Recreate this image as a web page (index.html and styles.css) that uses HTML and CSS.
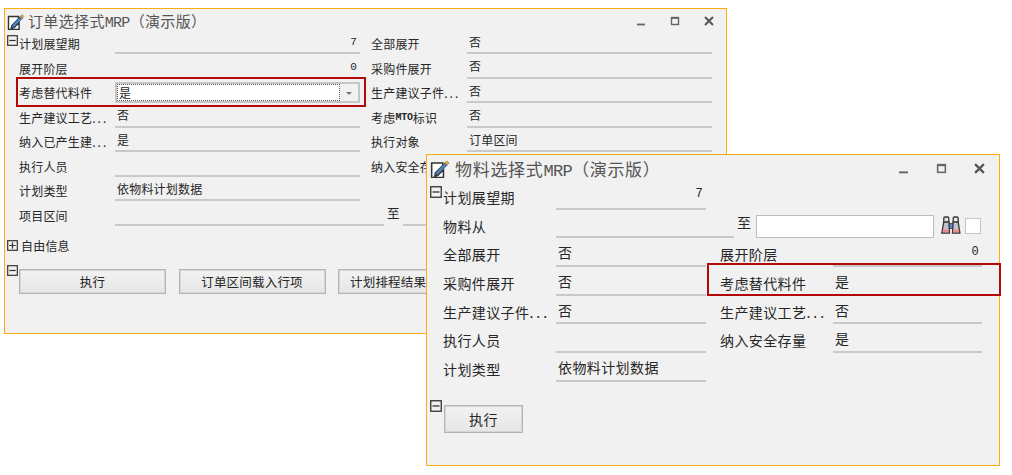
FILE: index.html
```html
<!DOCTYPE html>
<html lang="zh-CN">
<head>
<meta charset="utf-8">
<title>MRP</title>
<link rel="stylesheet" href="styles.css">
</head>
<body>
<svg class="defs" width="0" height="0" aria-hidden="true">
  <symbol id="note" viewBox="0 0 18 18">
    <path d="M1.500 4.500h10v2.200l-6.600 6.800-.6 2.800 2.800-.7 5-5v6.900h-10.600z" fill="#fff" stroke="#333" stroke-width="1.400"/>
    <path d="M5.500 12.800 13.500 4.300l2 1.900-8 8.400-2.700.8z" fill="#4d84b8" stroke="#2d4f73" stroke-width=".7"/>
    <path d="M13.500 4.300l1.600-1.700 2 1.900-1.600 1.700z" fill="#e8b04a" stroke="#a87a20" stroke-width=".6"/>
  </symbol>
  <symbol id="minus" viewBox="0 0 12 12">
    <rect x=".75" y=".75" width="10.500" height="10.500" fill="none" stroke="#333" stroke-width="1.300"/>
    <path d="M2.500 6h7" stroke="#333" stroke-width="1.300"/>
  </symbol>
  <symbol id="plus" viewBox="0 0 12 12">
    <rect x=".75" y=".75" width="10.500" height="10.500" fill="none" stroke="#333" stroke-width="1.300"/>
    <path d="M2.500 6h7M6 2.500v7" stroke="#333" stroke-width="1.300"/>
  </symbol>
  <symbol id="win-min" viewBox="0 0 10 10"><path d="M1 8.500h8" stroke="#666" stroke-width="1.800"/></symbol>
  <symbol id="win-max" viewBox="0 0 10 10"><rect x="1.500" y="1.500" width="7" height="7" fill="none" stroke="#666" stroke-width="1.400"/><path d="M1.500 2.200h7" stroke="#666" stroke-width="1.400"/></symbol>
  <symbol id="win-close" viewBox="0 0 10 10"><path d="M1 1l8 8M9 1l-8 8" stroke="#555" stroke-width="2"/></symbol>
  <symbol id="binoculars" viewBox="0 0 20 18">
    <rect x="2.800" y="1" width="5" height="6" rx="1.200" fill="#e4e6ea" stroke="#333" stroke-width="1.300"/>
    <rect x="12.200" y="1" width="5" height="6" rx="1.200" fill="#e4e6ea" stroke="#333" stroke-width="1.300"/>
    <path d="M2.800 6h5.200l.5 11h-7.700zM12 6h5.200l1.700 11h-7.400z" fill="#bfc3cb" stroke="#333" stroke-width="1.300"/>
    <path d="M8.300 7.500h3.400v5h-3.400z" fill="#5f86cc" stroke="#333" stroke-width=".8"/>
    <path d="M1.800 13.500h6.100v3h-6.100zM12.100 13.500h6.100v3h-6.100z" fill="#ee8c8c"/>
  </symbol>
</svg>

<section class="window window-order">
  <header class="titlebar">
    <svg class="title-icon"><use href="#note"/></svg>
    <h1 class="title">订单选择式<span class="latin">MRP</span>（演示版）</h1>
    <div class="controls">
      <svg class="ctl"><use href="#win-min"/></svg>
      <svg class="ctl"><use href="#win-max"/></svg>
      <svg class="ctl"><use href="#win-close"/></svg>
    </div>
  </header>
  <div class="form">
    <div class="label"><svg class="toggle"><use href="#minus"/></svg>计划展望期</div>
    <div class="field num">7</div>
    <div class="label right">全部展开</div>
    <div class="field">否</div>

    <div class="label">展开阶层</div>
    <div class="field num">0</div>
    <div class="label right">采购件展开</div>
    <div class="field">否</div>

    <div class="label">考虑替代料件</div>
    <div class="combo"><span class="combo-text">是</span><span class="combo-arrow"></span></div>
    <div class="label right">生产建议子件<span class="dots">...</span></div>
    <div class="field">否</div>

    <div class="label">生产建议工艺<span class="dots">...</span></div>
    <div class="field">否</div>
    <div class="label right">考虑<span class="mini">MTO</span>标识</div>
    <div class="field">否</div>

    <div class="label">纳入已产生建<span class="dots">...</span></div>
    <div class="field">是</div>
    <div class="label right">执行对象</div>
    <div class="field">订单区间</div>

    <div class="label">执行人员</div>
    <div class="field"></div>
    <div class="label right">纳入安全存量</div>
    <div class="field"></div>

    <div class="label">计划类型</div>
    <div class="field">依物料计划数据</div>

    <div class="label">项目区间</div>
    <div class="range">
      <div class="field range-from"></div>
      <span class="to">至</span>
      <div class="field range-to"></div>
    </div>
  </div>
  <div class="group-row"><svg class="toggle-inline"><use href="#plus"/></svg>自由信息</div>
  <div class="actions">
    <svg class="toggle-inline action-toggle"><use href="#minus"/></svg>
    <button class="btn">执行</button>
    <button class="btn">订单区间载入行项</button>
    <button class="btn btn-clipped">计划排程结果</button>
  </div>
</section>

<div class="mark mark-order"></div>

<section class="window window-material">
  <header class="titlebar">
    <svg class="title-icon"><use href="#note"/></svg>
    <h1 class="title">物料选择式<span class="latin">MRP</span>（演示版）</h1>
    <div class="controls">
      <svg class="ctl"><use href="#win-min"/></svg>
      <svg class="ctl"><use href="#win-max"/></svg>
      <svg class="ctl"><use href="#win-close"/></svg>
    </div>
  </header>
  <div class="form">
    <div class="label"><svg class="toggle"><use href="#minus"/></svg>计划展望期</div>
    <div class="field num">7</div>

    <div class="label">物料从</div>
    <div class="range">
      <div class="field range-from"></div>
      <span class="to">至</span>
      <div class="text-input"></div>
      <svg class="binoculars"><use href="#binoculars"/></svg>
      <div class="check"></div>
    </div>

    <div class="label">全部展开</div>
    <div class="field">否</div>
    <div class="label right">展开阶层</div>
    <div class="field num">0</div>

    <div class="label">采购件展开</div>
    <div class="field">否</div>
    <div class="label right">考虑替代料件</div>
    <div class="field">是</div>

    <div class="label">生产建议子件<span class="dots">...</span></div>
    <div class="field">否</div>
    <div class="label right">生产建议工艺<span class="dots">...</span></div>
    <div class="field">否</div>

    <div class="label">执行人员</div>
    <div class="field"></div>
    <div class="label right">纳入安全存量</div>
    <div class="field">是</div>

    <div class="label">计划类型</div>
    <div class="field">依物料计划数据</div>
  </div>
  <div class="actions">
    <svg class="toggle-inline action-toggle"><use href="#minus"/></svg>
    <button class="btn">执行</button>
  </div>
</section>

<div class="mark mark-material"></div>
</body>
</html>
```
FILE: styles.css
```css
* { box-sizing: border-box; }
html, body { margin: 0; height: 100%; }
body {
  position: relative;
  background: #fff;
  overflow: hidden;
  color: #262626;
  font-family: "Noto Sans CJK SC", "Liberation Sans", sans-serif;
}
.defs { position: absolute; }

.window {
  position: absolute;
  background: #f1f1f1;
  border: 1px solid #ffab12;
  overflow: hidden;
}
.window-order {
  left: 4px; top: 8px; width: 723px; height: 326px;
  font-size: 12px;
  letter-spacing: .2px;
  --pad: 14px;
}
.window-material {
  left: 426px; top: 154px; width: 574px; height: 312px;
  font-size: 14px;
  letter-spacing: .4px;
  --pad: 16px;
}

.titlebar { display: flex; align-items: center; }
.window-order .titlebar { height: 20px; padding: 3px 12px 0 2px; }
.window-material .titlebar { height: 28px; padding: 0 14px 2px 3px; }
.title-icon { flex: none; }
.window-order .title-icon { width: 18px; height: 18px; }
.window-material .title-icon { width: 20px; height: 20px; }
.title { margin: 0; flex: 1; font-weight: 400; color: #555; white-space: nowrap; }
.window-order .title { font-size: 15px; margin-left: 3px; letter-spacing: .35px; }
.window-material .title { font-size: 17px; margin-left: 5px; letter-spacing: .7px; }
.latin { font-family: "Liberation Mono", monospace; letter-spacing: -.7px; }
.controls { display: flex; align-items: center; }
.window-order .controls { gap: 24px; }
.window-material .controls { gap: 27px; }
.ctl { display: block; }
.window-order .ctl { width: 10px; height: 10px; }
.window-material .ctl { width: 11px; height: 11px; }

.form { display: grid; align-items: stretch; padding-left: var(--pad); }
.window-order .form {
  grid-template-columns: 96px 245px 11px 96px 245px;
  grid-auto-rows: 24.5px;
  margin-top: .5px;
}
.window-material .form {
  grid-template-columns: 113px 150px 14px 113px 149px;
  grid-auto-rows: 28.7px;
  margin-top: -2px;
}

.label {
  grid-column: 1;
  display: flex;
  align-items: center;
  white-space: nowrap;
  padding-top: 4px;
  position: relative;
}
.window-material .label { padding-top: 3px; }
.label.right { grid-column: 4; }
.dots { letter-spacing: 2px; }
.window-material .dots { letter-spacing: 3px; }
.mini { font-size: 10px; letter-spacing: -.2px; font-family: "Liberation Mono", monospace; font-weight: 700; }

.toggle { position: absolute; top: 5px; left: -12px; width: 11px; height: 11px; }
.window-material .toggle { left: -13px; top: 5px; width: 12px; height: 12px; }

.field {
  display: flex;
  align-items: center;
  padding: 1px 2px 0;
  border-bottom: 2px solid #c9c9c9;
  white-space: nowrap;
}
.num { justify-content: flex-end; padding: 3px 3px 0 0; font-family: "Liberation Mono", monospace; font-size: 11px; }
.window-material .num { font-size: 12px; padding-top: 0; }

.combo {
  display: flex;
  align-items: stretch;
  height: 21px;
  margin-top: 3px;
  border: 2px solid #c6c6c6;
  background: #fff;
}
.combo-text {
  flex: 1;
  padding-left: 1px;
  line-height: 15px;
  border: 1px dotted #555;
  background: #fff;
}
.combo-arrow {
  width: 18px;
  background: #f1f1f1;
  position: relative;
}
.combo-arrow::after {
  content: "";
  position: absolute;
  left: 6px; top: 8px;
  border: 3px solid transparent;
  border-top: 3px solid #777;
  border-bottom: 0;
}

.range { display: flex; align-items: stretch; grid-column: 2 / span 4; }
.range-from { width: 269px; flex: none; }
.window-material .range-from { width: 178px; }
.to { flex: none; padding: 0 3px; }
.window-order .to { font-size: 12.500px; line-height: 24px; }
.window-material .to { font-size: 14px; padding: 0 5px 0 3px; line-height: 25px; }
.range-to { flex: 1; }
.text-input {
  flex: none;
  width: 178px;
  height: 23px;
  margin-top: 5px;
  background: #fff;
  border: 1px solid #bdbdbd;
}
.binoculars { flex: none; width: 20px; height: 18px; margin: 6px 0 0 7px; }
.check {
  flex: none;
  width: 16px;
  height: 16px;
  margin: 8px 0 0 4px;
  background: #fff;
  border: 1px solid #c4c4c4;
}

.group-row {
  display: flex;
  align-items: center;
  height: 20px;
  margin: 10px 0 0 2px;
  gap: 3px;
}
.toggle-inline { display: block; flex: none; width: 11px; height: 11px; }
.actions { display: flex; position: relative; padding-left: var(--pad); }
.window-order .actions { gap: 12.500px; margin-top: 13px; }
.window-material .actions { gap: 13px; margin-top: 23px; padding-left: 17px; }
.action-toggle { position: absolute; left: 2px; top: -4px; }
.window-material .action-toggle { left: 3px; top: -5px; width: 12px; height: 12px; }

.btn {
  flex: none;
  padding: 0;
  font: inherit;
  letter-spacing: inherit;
  color: inherit;
  white-space: nowrap;
  overflow: hidden;
  background: linear-gradient(#f2f2f2, #e6e6e6);
  border: 1px solid #b4b4b4;
  box-shadow: inset 0 0 0 1px #d6d6d6;
}
.window-order .btn { width: 147px; height: 25px; font-size: 12.500px; }
.window-material .btn { width: 79px; height: 28px; font-size: 14px; }
.window-order .btn-clipped { width: 90px; padding-left: 11px; text-align: left; }

.mark { position: absolute; border: 2px solid #b20808; }
.mark-order { left: 16px; top: 77px; width: 350px; height: 30px; }
.mark-material { left: 707px; top: 263px; width: 294px; height: 33px; }
```
